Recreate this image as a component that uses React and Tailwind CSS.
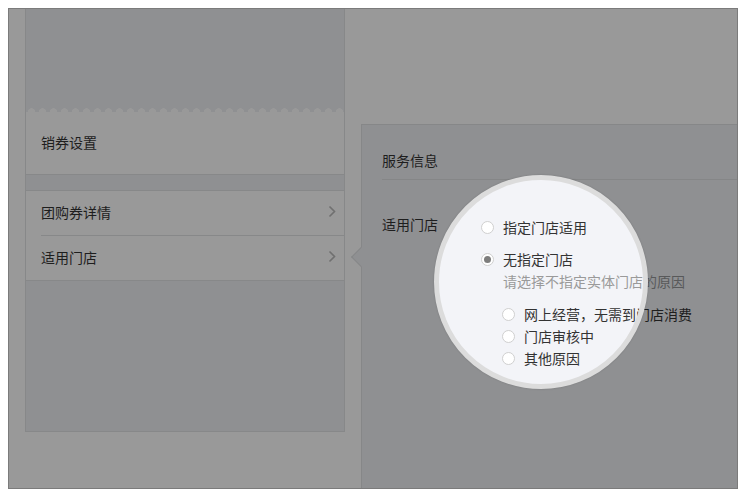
import React from "react";

function Chevron() {
  return (
    <svg width="8" height="13" viewBox="0 0 8 13" className="shrink-0">
      <polyline points="1.5,1.5 6.5,6.5 1.5,11.5" fill="none" stroke="#707070" strokeWidth="1.6" />
    </svg>
  );
}

function Radio({ checked }) {
  return (
    <span className="w-[13px] h-[13px] rounded-full border border-[#cfcfcf] bg-white flex items-center justify-center shrink-0">
      {checked ? <span className="w-[7px] h-[7px] rounded-full bg-[#7d7d7d]" /> : null}
    </span>
  );
}

function Form({ bright }) {
  const text = bright ? "text-[#333333]" : "text-[#1e1e1e]";
  return (
    <div className="w-[375px] text-[14px] leading-[20px]">
      <div className="ml-[20px] h-[55px] pt-[25px] border-b border-[#858687]">
        <span className={bright ? "invisible" : "text-[#1e1e1e]"}>服务信息</span>
      </div>
      <div className="flex pl-[20px] pt-[34px]">
        <div className="w-[99px]">
          <span className={bright ? "invisible" : "text-[#1e1e1e]"}>适用门店</span>
        </div>
        <div className="flex flex-col mt-[3px]">
          <div className="flex items-center h-[20px] gap-[9px]">
            <Radio />
            <span className={text}>指定门店适用</span>
          </div>
          <div className="flex items-center h-[20px] gap-[9px] mt-[12px]">
            <Radio checked />
            <span className={text}>无指定门店</span>
          </div>
          <div className={bright ? "pl-[22px] mt-[2px] whitespace-nowrap text-[#9a9a9a]" : "pl-[22px] mt-[2px] whitespace-nowrap text-[#58595a]"}>
            请选择不指定实体门店的原因
          </div>
          <div className="flex flex-col pl-[21px] mt-[12px]">
            {["网上经营，无需到门店消费", "门店审核中", "其他原因"].map((t) => (
              <div key={t} className="flex items-center h-[22px] gap-[9px] whitespace-nowrap">
                <Radio />
                <span className={text}>{t}</span>
              </div>
            ))}
          </div>
        </div>
      </div>
    </div>
  );
}

export default function App() {
  return (
    <div className="w-[750px] h-[496px] bg-white pt-[8px] pl-[8px] font-[family-name:'Noto_Sans_CJK_SC',sans-serif]">
      <div className="w-[730px] h-[481px] border border-[#7b7b7b] bg-[#999999] flex overflow-hidden">
        {/* Left panel */}
        <div className="ml-[16px] w-[320px] h-[423px] border-x border-b border-[#878889] flex flex-col shrink-0 text-[14px] leading-[20px] text-[#1e1e1e]">
          <div className="h-[99px] bg-[#8f9092]" />
          <div className="h-[4px] bg-[#8f9092] bg-[radial-gradient(circle_at_50%_100%,#999999_3.5px,transparent_4px)] bg-[length:11px_4px] bg-repeat-x" />
          <div className="h-[63px] pl-[15px] pt-[20px] border-b border-[#878889]">销券设置</div>
          <div className="h-[16px] bg-[#8f9092] border-b border-[#878889]" />
          <div className="h-[45px] pl-[15px]">
            <div className="h-full flex items-center justify-between pr-[8px] pb-[3px] border-b border-[#878889]">
              <span>团购券详情</span>
              <Chevron />
            </div>
          </div>
          <div className="h-[45px] pl-[15px] pr-[8px] pb-[3px] flex items-center justify-between border-b border-[#878889]">
            <span>适用门店</span>
            <Chevron />
          </div>
          <div className="flex-1 bg-[#8f9092]" />
        </div>

        {/* Right panel */}
        <div className="relative ml-[16px] mt-[115px] flex-1 bg-[#8f9092] border-l border-t border-[#868788]">
          <div className="absolute left-[-8px] top-[125px] w-[14px] h-[14px] rotate-45 bg-[#8f9092] border-l border-b border-[#868788]" />
          <Form />
          <div className="absolute left-[72px] top-[50px] w-[214px] h-[214px] rounded-full border-[5px] border-[#dcdcdc] bg-[#f3f4f8] overflow-hidden shadow-[0_0_2px_rgba(0,0,0,0.18)]">
            <div className="absolute left-[-77px] top-[-55px]">
              <Form bright />
            </div>
          </div>
        </div>
      </div>
    </div>
  );
}
